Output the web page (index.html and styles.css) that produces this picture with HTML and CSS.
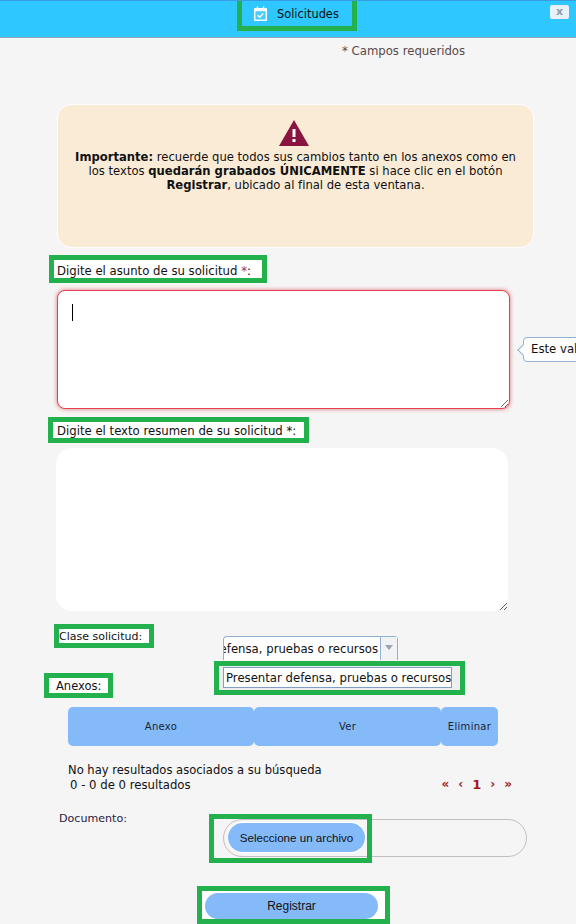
FILE: index.html
```html
<!DOCTYPE html>
<html lang="es">
<head>
    <meta charset="UTF-8">
    <title>Solicitudes</title>
    <link rel="stylesheet" href="styles.css">
</head>

<body>

    <header class="top-bar">
        <div class="mark title-mark">
            <svg class="cal-icon" viewBox="0 0 14 16" width="13" height="15">
                <path d="M1 2h2V0.5h1.500V2h5V0.5H11V2h2a1 1 0 0 1 1 1v12a1 1 0 0 1-1 1H1a1 1 0 0 1-1-1V3a1 1 0 0 1 1-1z" fill="#fff"/>
                <rect x="1.500" y="5.500" width="11" height="9" fill="#4cccfb"/>
                <path d="M4 10l2 2 4-4" fill="none" stroke="#fff" stroke-width="1.500"/>
            </svg>
            <span>Solicitudes</span>
        </div>
        <button class="close-btn">x</button>
    </header>

    <div class="required">* Campos requeridos</div>

    <div class="notice">
        <svg class="warn-icon" viewBox="0 0 30 26" width="30" height="26">
            <path d="M15 0L30 26H0z" fill="#8a1440"/>
            <rect x="13.500" y="9" width="3" height="8" fill="#fff"/>
            <rect x="13.500" y="19" width="3" height="3" fill="#fff"/>
        </svg>
        <p><b>Importante:</b> recuerde que todos sus cambios tanto en los anexos como en los textos <b>quedarán grabados ÚNICAMENTE</b> si hace clic en el botón <b>Registrar</b>, ubicado al final de esta ventana.</p>
    </div>

    <div class="mark label-subject">Digite el asunto de su solicitud <span class="red">*</span>:</div>
    <div class="field-wrap">
        <textarea class="subject-input"></textarea>
        <span class="caret"></span>
        <div class="tip">Este valor es requerido</div>
    </div>

    <div class="mark label-summary">Digite el texto resumen de su solicitud *:</div>
    <textarea class="summary-input"></textarea>

    <div class="class-row">
        <div class="mark label-class">Clase solicitud:</div>
        <div class="select-box">
            <div class="select-text"><span>Presentar defensa, pruebas o recursos</span></div>
            <div class="select-arrow"></div>
            <div class="mark dropdown"><div class="dropdown-item">Presentar defensa, pruebas o recursos</div></div>
        </div>
    </div>

    <div class="mark label-annex">Anexos:</div>

    <div class="table-head">
        <div class="col col-annex">Anexo</div>
        <div class="col col-view">Ver</div>
        <div class="col col-del">Eliminar</div>
    </div>

    <div class="results">
        <div class="no-results">No hay resultados asociados a su búsqueda</div>
        <div class="count-row">
            <span class="count">0 - 0 de 0 resultados</span>
            <span class="pager"><i>«</i><i>‹</i><b>1</b><i>›</i><i>»</i></span>
        </div>
    </div>

    <div class="doc-row">
        <div class="doc-label">Documento:</div>
        <div class="file-pill">
            <div class="mark file-mark"><button class="blue-btn file-btn">Seleccione un archivo</button></div>
        </div>
    </div>

    <div class="submit-row">
        <div class="mark submit-mark"><button class="blue-btn submit-btn">Registrar</button></div>
    </div>

</body>
</html>
```

FILE: styles.css
```css
* {
    box-sizing: border-box;
}
html, body {
    height: 924px;
    overflow: hidden;
}
body {
    margin: 0;
    font-family: 'DejaVu Sans', sans-serif;
    font-size: 11.7px;
    line-height: 14px;
    background-color: #f5f5f5;
    color: #111;
}
.mark {
    border: 5px solid #22b14c;
    background: #fff;
    white-space: nowrap;
}
.red {
    color: #a33;
}
.top-bar {
    position: relative;
    height: 38px;
    background-color: #2ec7ff;
    border-top: 1px solid #3b9be0;
    border-bottom: 1px solid #8fa8b8;
}
.title-mark {
    width: 120px;
    height: 30px;
    margin-left: 237px;
    background: transparent;
    border-top: 0;
    display: flex;
    align-items: center;
    gap: 10px;
    padding-left: 12px;
    font-size: 11.4px;
}
.cal-icon {
    flex-shrink: 0;
}
.close-btn {
    position: absolute;
    right: 7px;
    top: 4px;
    width: 19px;
    height: 14px;
    padding: 0;
    border: 0;
    border-radius: 2px;
    background: #e8f0f8;
    color: #8a9bb0;
    font: bold 11px/12px 'DejaVu Sans', sans-serif;
}
.required {
    margin: 6px 0 0 342px;
    color: #5a4a4a;
}
.notice {
    width: 477px;
    height: 144px;
    margin: 46px 0 0 57px;
    padding: 15px 14px 0;
    background-color: #faebd7;
    border: 1px solid #fff;
    border-radius: 14px;
    text-align: center;
    font-size: 11.6px;
}
.warn-icon {
    display: block;
    margin: 0 auto 4px;
    position: relative;
    left: -2px;
}
.notice p {
    margin: 0;
}
.label-subject {
    width: 218px;
    height: 28px;
    margin: 7px 0 0 49px;
    padding: 4px 3px;
}
.field-wrap {
    position: relative;
    width: 453px;
    height: 119px;
    margin: 7px 0 0 57px;
}
.subject-input {
    display: block;
    width: 100%;
    height: 100%;
    border: 1px solid #e0454f;
    border-radius: 8px;
    background: #fff;
    box-shadow: 0 0 4px rgba(220, 60, 70, 0.7);
    outline: none;
}
.caret {
    position: absolute;
    left: 15px;
    top: 14px;
    width: 1px;
    height: 17px;
    background: #000;
}
.tip {
    position: absolute;
    left: 466px;
    top: 47px;
    height: 25px;
    padding: 4px 7px;
    background: #fff;
    border: 1px solid #8fb0d0;
    border-radius: 4px;
    white-space: nowrap;
}
.tip::before {
    content: "";
    position: absolute;
    left: -5px;
    top: 8px;
    width: 7px;
    height: 7px;
    background: #fff;
    border-left: 1px solid #8fb0d0;
    border-bottom: 1px solid #8fb0d0;
    transform: rotate(45deg);
}
.label-summary {
    width: 261px;
    height: 26px;
    margin: 8px 0 0 48px;
    padding: 2px 4px;
}
.summary-input {
    display: block;
    width: 452px;
    height: 163px;
    margin: 5px 0 0 56px;
    border: 0;
    border-radius: 16px;
    background: #fff;
    outline: none;
}
.class-row {
    display: flex;
    align-items: flex-start;
    height: 36px;
    margin: 13px 0 0 54px;
}
.label-class {
    width: 100px;
    height: 24px;
    padding: 1px 0;
    font-size: 11px;
}
.select-box {
    position: relative;
    display: flex;
    width: 175px;
    height: 24px;
    margin: 12px 0 0 69px;
    background: #fff;
    border: 1px solid #8fb0d0;
    border-bottom: 0;
    border-radius: 4px 4px 0 0;
}
.select-text {
    flex: 1;
    min-width: 0;
    display: flex;
    justify-content: flex-end;
    overflow: hidden;
    padding: 5px 2px 0 0;
}
.select-text span {
    flex-shrink: 0;
    white-space: nowrap;
}
.select-arrow {
    position: relative;
    width: 17px;
    background: #f0f2f5;
    border-left: 1px solid #8fb0d0;
}
.select-arrow::after {
    content: "";
    position: absolute;
    left: 4px;
    top: 8px;
    border: 4px solid transparent;
    border-top: 5px solid #9aa4b4;
}
.dropdown {
    position: absolute;
    left: -10px;
    top: 24px;
    width: 251px;
    height: 34px;
    padding: 1px 4px;
    background: #efefef;
    z-index: 2;
}
.dropdown-item {
    width: 229px;
    height: 21px;
    padding: 3px 2px;
    background: #fff;
    border: 1px solid #7fa0c4;
}
.label-annex {
    width: 69px;
    height: 25px;
    margin: 13px 0 0 44px;
    padding: 1px 7px;
    font-size: 11.5px;
}
.table-head {
    display: flex;
    width: 430px;
    height: 39px;
    margin: 9px 0 0 68px;
    font-size: 10px;
}
.col {
    display: flex;
    align-items: center;
    justify-content: center;
    background-color: #85baf9;
    border-radius: 5px;
    color: #1a2433;
    letter-spacing: 0.3px;
}
.col-annex {
    width: 186px;
}
.col-view {
    width: 187px;
}
.col-del {
    width: 57px;
}
.results {
    width: 444px;
    margin: 17px 0 0 68px;
}
.no-results {
    line-height: 15px;
    font-size: 11.55px;
}
.count-row {
    display: flex;
    justify-content: space-between;
    align-items: center;
    padding-left: 2px;
    line-height: 15px;
}
.pager {
    display: flex;
    align-items: center;
    gap: 9px;
    margin-top: -2px;
    color: #a01c1c;
    font-size: 12px;
}
.pager i {
    font-style: normal;
    font-weight: bold;
}
.pager b {
    font-size: 13px;
}
.doc-row {
    display: flex;
    align-items: flex-start;
    margin: 19px 0 0 59px;
}
.doc-label {
    width: 164px;
    color: #2a1a3a;
    font-size: 11.1px;
}
.file-pill {
    position: relative;
    width: 304px;
    height: 38px;
    margin-top: 7px;
    border: 1px solid #c0c0c0;
    border-radius: 19px;
}
.file-mark {
    position: absolute;
    left: -15px;
    top: -6px;
    width: 163px;
    height: 49px;
    padding: 4px 0 0 14px;
    background: transparent;
}
.blue-btn {
    padding: 0;
    border: 0;
    background-color: #85baf9;
    color: #111;
    font-family: 'Liberation Sans', sans-serif;
    font-size: 12px;
}
.file-btn {
    width: 137px;
    height: 29px;
    border-radius: 15px;
    font-size: 11.6px;
    box-shadow: 0 0 0 1px #fff;
}
.submit-row {
    margin: 29px 0 0 197px;
}
.submit-mark {
    width: 193px;
    height: 38px;
    padding: 2px 3px 0;
}
.submit-btn {
    width: 173px;
    height: 26px;
    border-radius: 13px;
}
```
